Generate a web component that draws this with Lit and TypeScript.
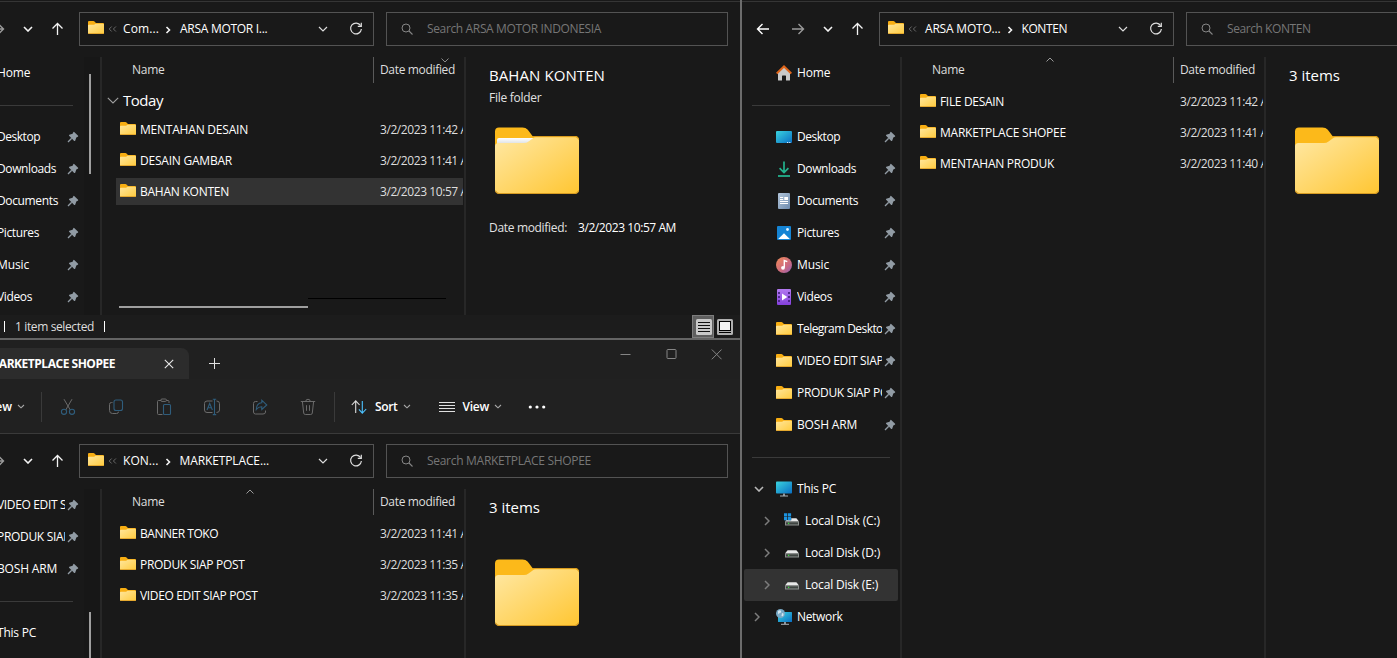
import { LitElement, html, css, svg, nothing } from "lit";
import { customElement, property, query } from "lit/decorators.js";
import { classMap } from "lit/directives/class-map.js";

/** A run of text tracked so that it fills a given width. */
@customElement("fit-text")
class FitText extends LitElement {
  @property() text = "";
  @property({ type: Number }) width = 0;
  @query("span") private run!: HTMLSpanElement;
  static styles = css`
    :host { display: inline-block; white-space: pre; flex: none; }
    span { display: inline-block; }
  `;
  updated() {
    this.run.style.letterSpacing = "0px";
    const natural = this.run.getBoundingClientRect().width;
    if (this.width) this.run.style.letterSpacing = (this.width - natural) / this.text.length + "px";
  }
  render() {
    return html`<span>${this.text}</span>`;
  }
}

const t = (text: string, width: number) => html`<fit-text .text=${text} .width=${width}></fit-text>`;

const drive = svg`
  <path d="M3.6 5.2h8.8l2.6 3.4H1z" fill="#e8e8e8"/>
  <path d="M1 8.4h14v4.1H1z" fill="#8d918f"/>
  <path d="M2 9.3h12v2.2H2z" fill="#3f4441"/>
  <path d="M4 9.8h1.2v1.2H4z" fill="#39e03c"/>`;

const screen = svg`
  <defs><linearGradient id="scr" x1="0" y1="0" x2="1" y2="1">
    <stop offset="0" stop-color="#3ad3de"/><stop offset="1" stop-color="#0a6fc4"/></linearGradient></defs>`;

const shapes: Record<string, { w: number; h: number; body: unknown }> = {
  folder: { w: 16, h: 13, body: svg`
    <defs><linearGradient id="f" x1="0" y1="0" x2="1" y2="1">
      <stop offset="0" stop-color="#ffe69c"/><stop offset="1" stop-color="#ffcb3d"/></linearGradient></defs>
    <path d="M0 1Q0 0 1 0h4.5q.6 0 1 .4L8 1.9h7q1 0 1 1V8H0z" fill="#f8ae12"/>
    <path d="M0 4.6q0-.9.9-.9H5.6q.5 0 .9-.3l1-.6h7.6q.9 0 .9.9v8.3q0 1-1 1H1q-1 0-1-1z" fill="url(#f)"/>
    <path d="M.3 12.5h15.4" stroke="#e2a42a" stroke-width=".9"/>` },
  bigfolder: { w: 84, h: 67, body: svg`
    <defs><linearGradient id="f" x1="0" y1="0" x2="1" y2="1">
      <stop offset="0" stop-color="#ffe8a4"/><stop offset="1" stop-color="#ffc632"/></linearGradient></defs>
    <path d="M0 4.500q0-4 4-4h23.5q3.2 0 5.300 2.200L37.500 9H80q4 0 4 4V40H0z" fill="#fcb91a"/>
    <path d="M0 19.500q0-3.500 3.500-3.500H29q2.500 0 4.500-1.500l4.500-3.300q1-1 3-1h39q4 0 4 3.500V62.500q0 4-4 4H4q-4 0-4-4z" fill="url(#f)"/>
    <path d="M37.500 9.500H80.500q2.500.3 3 3" fill="none" stroke="#d99b1e" stroke-width="1"/>
    <path d="M.5 64q1 2.500 3.500 2.500h76q2.500 0 3.500-2.500" fill="none" stroke="#d69b22" stroke-width="1.200"/>` },
  bigfolderfull: { w: 84, h: 67, body: svg`
    <defs><linearGradient id="f" x1="0" y1="0" x2="1" y2="1">
      <stop offset="0" stop-color="#ffe8a4"/><stop offset="1" stop-color="#ffc632"/></linearGradient>
      <linearGradient id="p" x1="0" y1="0" x2="0" y2="1">
      <stop offset="0" stop-color="#ffffff"/><stop offset="1" stop-color="#cfd3d8"/></linearGradient></defs>
    <path d="M0 4.500q0-4 4-4h23.5q3.200 0 5.300 2.200L37.500 9H80q4 0 4 4V40H0z" fill="#fcb91a"/>
    <path d="M2 13q0-2 2-2H38v8H2z" fill="url(#p)"/>
    <path d="M0 19.500q0-3.500 3.500-3.500H29q2.500 0 4.500-1.500l4.500-3.300q1-1 3-1h39q4 0 4 3.500V62.500q0 4-4 4H4q-4 0-4-4z" fill="url(#f)"/>
    <path d="M37.500 9.500H80.500q2.500.3 3 3" fill="none" stroke="#d99b1e" stroke-width="1"/>
    <path d="M.5 64q1 2.500 3.500 2.500h76q2.500 0 3.500-2.500" fill="none" stroke="#d69b22" stroke-width="1.200"/>` },
  back: { w: 14, h: 14, body: svg`<path d="M13 7H1.600M6.500 2 1.500 7l5 5" fill="none" stroke="#fff" stroke-width="1.400"/>` },
  forward: { w: 14, h: 14, body: svg`<path d="M1 7h11.400M7.500 2l5 5-5 5" fill="none" stroke="#9a9a9a" stroke-width="1.400"/>` },
  up: { w: 14, h: 14, body: svg`<path d="M6.500 13V1.600M1.500 6.500l5-5 5 5" fill="none" stroke="#f4f4f4" stroke-width="1.300"/>` },
  recent: { w: 10, h: 6, body: svg`<path d="m1 1 4 4 4-4" fill="none" stroke="#f4f4f4" stroke-width="1.600"/>` },
  down: { w: 10, h: 6, body: svg`<path d="m1 1 4 4 4-4" fill="none" stroke="#dcdcdc" stroke-width="1.200"/>` },
  small: { w: 8, h: 5, body: svg`<path d="m1 1 3 2.800L7 1" fill="none" stroke="#a8a8a8" stroke-width="1.100"/>` },
  group: { w: 12, h: 7, body: svg`<path d="m.8.8 5.200 5.200L11.200.8" fill="none" stroke="#a0a0a0" stroke-width="1.100"/>` },
  sortup: { w: 8, h: 5, body: svg`<path d="m.5 4.500 3.500-3.500 3.500 3.500" fill="none" stroke="#9a9a9a" stroke-width="1"/>` },
  sortdown: { w: 8, h: 5, body: svg`<path d="m.5.5 3.500 3.500L7.500.5" fill="none" stroke="#8a8a8a" stroke-width="1"/>` },
  open: { w: 10, h: 6, body: svg`<path d="m1 1 4 4 4-4" fill="none" stroke="#b8b8b8" stroke-width="1.600"/>` },
  closed: { w: 6, h: 10, body: svg`<path d="m1 1 4 4-4 4" fill="none" stroke="#7d7d7d" stroke-width="1.500"/>` },
  crumb: { w: 8, h: 8, body: svg`<path d="m2.500 1 3 3-3 3" fill="none" stroke="#f4f4f4" stroke-width="1.600"/>` },
  overflow: { w: 9, h: 6, body: svg`<path d="M3.700.5 1.200 3l2.500 2.500M7.900.5 5.400 3l2.500 2.500" fill="none" stroke="#6a6a6a" stroke-width="1"/>` },
  refresh: { w: 14, h: 14, body: svg`<path d="M11.600 3.600A5.400 5.400 0 1 0 12.400 7" fill="none" stroke="#dedede" stroke-width="1.200"/><path d="M12.300.8v3.500H8.800" fill="none" stroke="#dedede" stroke-width="1.200"/>` },
  search: { w: 12, h: 12, body: svg`<circle cx="5" cy="5" r="4" fill="none" stroke="#868686" stroke-width="1"/><path d="m8 8 3.500 3.500" stroke="#868686" stroke-width="1.100"/>` },
  pin: { w: 12, h: 12, body: svg`<path d="M7.200.9 11.100 4.800q.4.600-.3.900L9.300 6.400 8.200 9.700q-.4.700-1 .2L2.100 4.800q-.5-.6.200-1L5.600 2.700 6.300 1.200q.3-.7.900-.3z" fill="#919ba4"/><path d="M4.700 7.300 1 11" stroke="#919ba4" stroke-width="1.300"/>` },
  home: { w: 16, h: 16, body: svg`
    <path d="M2 7.500 8 2l6 5.500V15q0 .6-.6.600H10V11q0-.6-.6-.6H6.600q-.6 0-.6.600v4.600H2.600q-.6 0-.6-.6z" fill="#c9c9c9"/>
    <path d="M.7 8.400 8 1.500l7.300 6.900" fill="none" stroke="#e0661b" stroke-width="2"/>` },
  desktop: { w: 16, h: 12, body: svg`${screen}<rect width="16" height="12" rx="1" fill="url(#scr)"/><path d="M11 11.500h1.200M13.200 11.500h1.200" stroke="#d8ecff"/>` },
  downloads: { w: 14, h: 16, body: svg`<path d="M7 .5v11M2.600 7.200 7 11.600l4.400-4.400" fill="none" stroke="#23b28d" stroke-width="1.700"/><path d="M1 15h12" stroke="#23b28d" stroke-width="1.800"/>` },
  documents: { w: 12, h: 16, body: svg`
    <defs><linearGradient id="d" x1="0" y1="0" x2="1" y2="1"><stop offset="0" stop-color="#b3c6da"/><stop offset="1" stop-color="#6d8bae"/></linearGradient></defs>
    <rect width="12" height="16" rx="1" fill="url(#d)"/><path d="M2 4.500h3.200M2 6.500h3.200M2 8.500h8M2 10.500h8" stroke="#fff"/><path d="M6.300 4H10v3H6.300z" fill="#fff"/>` },
  pictures: { w: 14, h: 14, body: svg`
    <rect width="14" height="14" rx="1" fill="#1584d4"/><path d="M1.200 13 7 7.300 12.800 13z" fill="#fff"/><circle cx="10.500" cy="3.500" r="1.400" fill="#e4f3ff"/>` },
  music: { w: 16, h: 16, body: svg`
    <defs><linearGradient id="m" x1="0" y1="0" x2="1" y2="1"><stop offset="0" stop-color="#f28b56"/><stop offset=".6" stop-color="#cc6a80"/><stop offset="1" stop-color="#8f60b8"/></linearGradient></defs>
    <circle cx="8" cy="8" r="8" fill="url(#m)"/><path d="M8.300 10.500V3.500l3 1.200" fill="none" stroke="#fff" stroke-width="1.400"/><circle cx="7" cy="10.800" r="1.900" fill="#fff"/>` },
  videos: { w: 14, h: 16, body: svg`
    <defs><linearGradient id="v" x1="0" y1="0" x2="0" y2="1"><stop offset="0" stop-color="#b37af0"/><stop offset="1" stop-color="#8440dc"/></linearGradient></defs>
    <rect width="14" height="16" rx="1" fill="url(#v)"/><path d="M5 4.500v7L10.300 8z" fill="#fff"/>
    <path d="M2 3v10M12 3v10" stroke="#42207c" stroke-width="1.700" stroke-dasharray="2 2"/>` },
  pc: { w: 16, h: 16, body: svg`${screen}<rect y=".5" width="16" height="12" rx=".8" fill="url(#scr)"/><path d="M7 12.500h2v2.500H7z" fill="#8a929a"/><path d="M4 15h8" stroke="#a8b0b6" stroke-width="1"/>` },
  network: { w: 16, h: 16, body: svg`${screen}<rect x="2" y="3" width="14" height="10" rx=".6" fill="url(#scr)"/><path d="M8 13h2v2H8z" fill="#8a929a"/><path d="M5 15.300h8" stroke="#a8b0b6" stroke-width="1"/><circle cx="4.500" cy="4.500" r="4.500" fill="#78a9c6"/><path d="M2 2q2-1.500 3 0t-1 2-2 1.500zM6 4q2 0 1.500 2T5.500 7z" fill="#d3e6f0"/>` },
  disk: { w: 16, h: 16, body: drive },
  sysdisk: { w: 16, h: 16, body: svg`${drive}<path d="M0 .2h7.200v7H0z" fill="#191919"/><path d="M0 .2h3.200v3.200H0zM3.900.2h3.200v3.200H3.900zM0 4.100h3.200v3.200H0zM3.900 4.100h3.200v3.200H3.900z" fill="#1c93e0"/>` },
  close: { w: 10, h: 10, body: svg`<path d="m.8.8 8.400 8.400M9.200.8.800 9.200" stroke="#e8e8e8" stroke-width="1.100"/>` },
  plus: { w: 11, h: 11, body: svg`<path d="M5.500 0v11M0 5.500h11" stroke="#e0e0e0" stroke-width="1"/>` },
  min: { w: 11, h: 11, body: svg`<path d="M.5 5.500h10" stroke="#858585"/>` },
  max: { w: 11, h: 11, body: svg`<rect x="1" y=".5" width="9" height="9" rx=".8" fill="none" stroke="#858585"/>` },
  exit: { w: 11, h: 11, body: svg`<path d="m.8.5 9.800 9.800M10.600.5.800 10.300" stroke="#858585"/>` },
  cut: { w: 16, h: 18, body: svg`<path d="M4 1.200 10.300 12M12 1.200 5.700 12" fill="none" stroke="#6b6b6b"/><circle cx="4" cy="13.800" r="2.600" fill="none" stroke="#2f5d7c" stroke-width="1.100"/><circle cx="12" cy="13.800" r="2.600" fill="none" stroke="#2f5d7c" stroke-width="1.100"/>` },
  copy: { w: 16, h: 18, body: svg`<path d="M4.500 4.500H3.500q-2 0-2 2v6q0 3 3 3h4q2 0 2-1.800" fill="none" stroke="#6b6b6b"/><rect x="6" y="2" width="8.500" height="10.500" rx="2" fill="none" stroke="#2f5d7c" stroke-width="1.100"/>` },
  paste: { w: 16, h: 18, body: svg`<path d="M6.500 16.500h-4q-1 0-1-1v-12q0-1 1-1H5M10.500 2.500H12q1 0 1 1V5" fill="none" stroke="#6b6b6b"/><rect x="4.800" y="1" width="5.700" height="2.400" rx="1.200" fill="none" stroke="#6b6b6b"/><rect x="7.500" y="6.500" width="7" height="10" rx="1" fill="none" stroke="#2f5d7c" stroke-width="1.100"/>` },
  rename: { w: 16, h: 18, body: svg`<path d="M8.500 14.500H3q-2.500 0-2.500-2.500V5.500Q.5 3 3 3h5.500M12.500 3q3 0 3 2.500V12q0 2.500-3 2.500" fill="none" stroke="#6b6b6b"/><path d="M3 12 5.700 5.500 8.400 12M4 9.800h3.500M10.500 1.500v15M8.800 1.300h3.400M8.800 16.600h3.400" fill="none" stroke="#2f5d7c" stroke-width="1.100"/>` },
  share: { w: 16, h: 18, body: svg`<path d="M5.500 3.500h-2q-2 0-2 2V14q0 2 2 2H11q2.500 0 2.500-2v-1.500" fill="none" stroke="#6b6b6b"/><path d="M4.300 11.500Q4.500 5 9.800 4.800V2.200L14.800 7 9.800 11.500V8.800Q6.500 8.700 4.300 11.500z" fill="none" stroke="#2f5d7c" stroke-width="1.100"/>` },
  trash: { w: 16, h: 18, body: svg`<path d="M.8 3.500h14.400M5.800 3.200q0-1.900 2.200-1.900t2.200 1.900M2.400 3.500 3.700 15q.2 1.500 1.600 1.500h5.400q1.400 0 1.600-1.500L13.600 3.500M6.500 7.200v5.600M9.500 7.200v5.600" fill="none" stroke="#6b6b6b"/>` },
  sort: { w: 16, h: 16, body: svg`<path d="M4.700 14V2M.8 6l3.900-4.200L8.600 6" fill="none" stroke="#dcdcdc" stroke-width="1.100"/><path d="M11.300 2v12M7.900 10.400l3.400 3.800 3.900-4.200" fill="none" stroke="#4cc2ff" stroke-width="1.100"/>` },
  lines: { w: 16, h: 12, body: svg`<path d="M0 1.500h16M0 4.500h16M0 7.500h16M0 10.500h16" stroke="#e0e0e0" stroke-width="1"/>` },
  dots: { w: 18, h: 4, body: svg`<circle cx="2.300" cy="2" r="1.600" fill="#fff"/><circle cx="9" cy="2" r="1.600" fill="#fff"/><circle cx="15.700" cy="2" r="1.600" fill="#fff"/>` },
  vdetails: { w: 16, h: 16, body: svg`<rect width="16" height="16" rx="1.500" fill="#c9c9c9"/><path d="M2 3.500h12M2 6.500h12M2 9.500h12M2 12.500h12" stroke="#111"/>` },
  vlarge: { w: 16, h: 16, body: svg`<rect width="16" height="16" rx="1.500" fill="#b0b0b0"/><rect x="2.500" y="2.500" width="11" height="9" fill="#f2f2f2" stroke="#000"/><path d="M2 13.500h12" stroke="#000"/>` },
};

@customElement("app-icon")
class AppIcon extends LitElement {
  @property() name = "";
  static styles = css`
    :host { display: block; flex: none; }
    svg { display: block; }
  `;
  render() {
    const s = shapes[this.name];
    return html`<svg width=${s.w} height=${s.h} viewBox="0 0 ${s.w} ${s.h}">${s.body}</svg>`;
  }
}

const icon = (name: string) => html`<app-icon name=${name}></app-icon>`;

type NavItem = { icon?: string; label?: string; w?: number; pin?: boolean; twist?: string; sub?: boolean; selected?: boolean; rule?: boolean };
type Row = { name: string; w: number; date: string; selected?: boolean };
type Pane = {
  crumbs: [string, number][]; wide?: boolean; search: [string, number]; nav: NavItem[]; scroll?: "top" | "bottom";
  sort: "up" | "down"; group?: boolean; rows: Row[]; title: [string, number]; kind?: string; modified?: string; hscroll?: boolean;
};

@customElement("explorer-pane")
class ExplorerPane extends LitElement {
  @property({ attribute: false }) pane!: Pane;
  static styles = css`
    :host { display: flex; flex-direction: column; width: 798px; min-height: 0; flex: 1; background: #191919; }
    * { box-sizing: border-box; }
    .bar { display: flex; height: 55px; flex: none; padding-top: 10px; }
    .nav { width: 137px; height: 34px; display: grid; grid-template-columns: 42px 27px 34px 25px 9px; justify-items: center; align-items: center; }
    .address { width: 295px; height: 34px; border: 1px solid #535353; display: flex; align-items: center; padding: 0 10px 0 8px; color: #fff; }
    .address .folder { margin-top: -3px; }
    .address .over { margin: -1px 6px 0 4px; }
    .address.wide .over { margin-right: 8px; }
    .address .crumb { margin: 1px 8px 0 5px; }
    .fill { flex: 1; }
    .address .drop { margin-right: 21px; }
    .search { width: 342px; height: 34px; margin-left: 12px; border: 1px solid #535353; display: flex; align-items: center; padding-left: 14px; color: #767676; gap: 14px; }
    .body { display: flex; flex: 1; min-height: 0; overflow: hidden; }
    .side { width: 158px; overflow: hidden; flex: none; display: flex; }
    .tree { width: 158px; padding-left: 2px; flex: none; }
    .scrolled .tree { width: 142px; }
    .track { width: 16px; background: #171717; padding-left: 5px; }
    .thumb { width: 2px; height: 100px; background: #9f9f9f; margin-top: 17px; }
    .thumb.low { margin-top: 123px; height: 200px; }
    .item { height: 32px; width: 154px; display: flex; align-items: center; padding: 0 0 0 32px; border-radius: 2px; color: #fff; }
    .scrolled .item { width: 137px; }
    .item.selected { background: #333; }
    .item.twisty { padding-left: 10px; }
    .item.sub { padding-left: 20px; }
    .twist { width: 22px; display: flex; align-items: center; }
    .sub .twist { width: 20px; }
    .glyph { width: 16px; display: flex; justify-content: center; }
    .glyph.low { margin-top: -1px; }
    .item .label { flex: 1; margin-left: 5px; overflow: hidden; display: flex; margin-right: 2px; }
    .item .pin { margin-right: 2px; }
    .rule { height: 32px; display: flex; align-items: center; padding: 0 10px 0 8px; }
    .rule i { height: 1px; flex: 1; background: #3a3a3a; }
    .scrolled .rule { padding-right: 11px; }
    .list { width: 364px; flex: none; border-left: 2px solid #272727; padding-right: 1px; overflow: hidden; display: flex; flex-direction: column; }
    .head { height: 29px; display: flex; color: #dedede; flex: none; }
    .cell { display: grid; justify-items: center; align-content: start; height: 26px; grid-template-columns: 100%; grid-template-rows: 5px 18px; }
    .cell.name { width: 271px; }
    .cell.name .cap { justify-self: start; padding-left: 30px; }
    .cell.name .mark { margin-left: 24px; }
    .cell.date { border-left: 1px solid #5a5a5a; flex: 1; justify-items: start; padding-left: 6px; }
    .cell .cap { display: flex; align-items: center; height: 16px; }
    .cell.date .mark { margin-left: 61px; margin-top: 1px; }
    .mark { height: 5px; }
    .group { height: 28px; display: flex; align-items: center; font-size: 15px; color: #fff; gap: 4px; padding: 0 0 0 5px; }
    .row { height: 27px; margin: 2px 0 2px 14px; display: flex; align-items: center; padding-left: 4px; color: #fff; }
    .row.selected { background: #333; }
    .row .name { width: 244px; padding-left: 4px; }
    .row .when { overflow: hidden; flex: 1; min-width: 0; color: #dedede; }
    .row .folder { margin-top: -2px; }
    .hscroll { margin-top: auto; height: 17px; display: flex; padding-left: 17px; }
    .hscroll .grip { width: 189px; height: 2px; margin-top: 8px; background: #9f9f9f; }
    .hscroll .rest { width: 138px; height: 1px; background: #000; }
    .details { flex: 1; border-left: 2px solid #272727; padding: 6px 0 0 23px; color: #e2e2e2; display: flex; flex-direction: column; }
    .title { height: 25px; line-height: 24px; font-size: 15px; color: #fff; }
    .kind { height: 19px; line-height: 20px; }
    .big { height: 67px; margin: 20px 0 0 6px; }
    .meta { margin-top: 24px; line-height: 20px; display: flex; gap: 11px; }
    .meta .value { color: #fff; }
  `;
  private navItem(i: NavItem) {
    if (i.rule) return html`<div class="rule"><i></i></div>`;
    return html`<div class=${classMap({ item: true, selected: !!i.selected, twisty: !!i.twist, sub: !!i.sub })}>
      ${i.twist ? html`<span class="twist">${icon(i.twist)}</span>` : nothing}
      <span class=${classMap({ glyph: true, low: i.icon === "folder" })}>${icon(i.icon!)}</span>
      <span class="label">${t(i.label!, i.w!)}</span>
      ${i.pin ? html`<span class="pin">${icon("pin")}</span>` : nothing}
    </div>`;
  }
  render() {
    const p = this.pane;
    const mark = (on: boolean) => html`<div class="mark">${on ? icon("sort" + p.sort) : nothing}</div>`;
    return html`
      <div class="bar">
        <div class="nav">${["back", "forward", "recent", "up"].map(icon)}</div>
        <div class=${classMap({ address: true, wide: !!p.wide })}>
          <span class="folder">${icon("folder")}</span><span class="over">${icon("overflow")}</span>
          ${t(...p.crumbs[0])}<span class="crumb">${icon("crumb")}</span>${t(...p.crumbs[1])}
          <span class="fill"></span><span class="drop">${icon("down")}</span>${icon("refresh")}
        </div>
        <div class="search">${icon("search")}${t(...p.search)}</div>
      </div>
      <div class="body">
        <div class=${classMap({ side: true, scrolled: !!p.scroll })}>
          <div class="tree">${p.nav.map((i) => this.navItem(i))}</div>
          ${p.scroll ? html`<div class="track"><div class=${classMap({ thumb: true, low: p.scroll === "bottom" })}></div></div>` : nothing}
        </div>
        <div class="list">
          <div class="head">
            <div class="cell name">${mark(p.sort === "up")}<div class="cap">${t("Name", 32.500)}</div></div>
            <div class="cell date">${mark(p.sort === "down")}<div class="cap">${t("Date modified", 75)}</div></div>
          </div>
          ${p.group ? html`<div class="group">${icon("group")}${t("Today", 40)}</div>` : nothing}
          ${p.rows.map((r) => html`<div class=${classMap({ row: true, selected: !!r.selected })}>
            <span class="folder">${icon("folder")}</span><span class="name">${t(r.name, r.w)}</span>
            <span class="when">${t(r.date, 98)}</span></div>`)}
          ${p.hscroll ? html`<div class="hscroll"><div class="grip"></div><div class="rest"></div></div>` : nothing}
        </div>
        <div class="details">
          <div class="title">${t(...p.title)}</div>
          <div class="kind">${p.kind ? t(p.kind, 52.500) : nothing}</div>
          <div class="big">${icon(p.kind ? "bigfolderfull" : "bigfolder")}</div>
          ${p.modified ? html`<div class="meta">${t("Date modified:", 78)}<span class="value">${t(p.modified, 98)}</span></div>` : nothing}
        </div>
      </div>`;
  }
}

const home: NavItem = { icon: "home", label: "Home", w: 33.500 };
const rule: NavItem = { rule: true };
const places: NavItem[] = [
  { icon: "desktop", label: "Desktop", w: 43, pin: true },
  { icon: "downloads", label: "Downloads", w: 59, pin: true },
  { icon: "documents", label: "Documents", w: 61, pin: true },
  { icon: "pictures", label: "Pictures", w: 42, pin: true },
  { icon: "music", label: "Music", w: 32, pin: true },
  { icon: "videos", label: "Videos", w: 35, pin: true },
];
const pinned: NavItem[] = [
  { icon: "folder", label: "VIDEO EDIT SIAP POST", w: 117.500, pin: true },
  { icon: "folder", label: "PRODUK SIAP POST", w: 104.500, pin: true },
  { icon: "folder", label: "BOSH ARM", w: 60, pin: true },
];
const thisPc: NavItem = { icon: "pc", label: "This PC", w: 39, twist: "open" };

const motor: Pane = {
  crumbs: [["Com...", 36], ["ARSA MOTOR I...", 87.500]],
  search: ["Search ARSA MOTOR INDONESIA", 174],
  nav: [home, rule, ...places],
  scroll: "top", sort: "down", group: true, hscroll: true,
  rows: [
    { name: "MENTAHAN DESAIN", w: 108, date: "3/2/2023 11:42 AM" },
    { name: "DESAIN GAMBAR", w: 92, date: "3/2/2023 11:41 AM" },
    { name: "BAHAN KONTEN", w: 89, date: "3/2/2023 10:57 AM", selected: true },
  ],
  title: ["BAHAN KONTEN", 116], kind: "File folder", modified: "3/2/2023 10:57 AM",
};
const shopee: Pane = {
  crumbs: [["KON...", 35.500], ["MARKETPLACE...", 89.500]],
  search: ["Search MARKETPLACE SHOPEE", 164],
  nav: [...pinned, rule, thisPc],
  scroll: "bottom", sort: "up",
  rows: [
    { name: "BANNER TOKO", w: 78, date: "3/2/2023 11:41 AM" },
    { name: "PRODUK SIAP POST", w: 104.500, date: "3/2/2023 11:35 AM" },
    { name: "VIDEO EDIT SIAP POST", w: 117.500, date: "3/2/2023 11:35 AM" },
  ],
  title: ["3 items", 51],
};
const konten: Pane = {
  crumbs: [["ARSA MOTO...", 75.500], ["KONTEN", 45.500]], wide: true,
  search: ["Search KONTEN", 83.500],
  nav: [
    home, rule, ...places,
    { icon: "folder", label: "Telegram Desktop", w: 92.500, pin: true },
    ...pinned, rule, thisPc,
    { icon: "sysdisk", label: "Local Disk (C:)", w: 75, twist: "closed", sub: true },
    { icon: "disk", label: "Local Disk (D:)", w: 75, twist: "closed", sub: true },
    { icon: "disk", label: "Local Disk (E:)", w: 73, twist: "closed", sub: true, selected: true },
    { icon: "network", label: "Network", w: 45.500, twist: "closed" },
  ],
  sort: "up",
  rows: [
    { name: "FILE DESAIN", w: 64, date: "3/2/2023 11:42 AM" },
    { name: "MARKETPLACE SHOPEE", w: 126, date: "3/2/2023 11:41 AM" },
    { name: "MENTAHAN PRODUK", w: 114, date: "3/2/2023 11:40 AM" },
  ],
  title: ["3 items", 51],
};

@customElement("app-root")
class AppRoot extends LitElement {
  static styles = css`
    :host { display: flex; width: 1397px; height: 658px; overflow: hidden; background: #191919; font: 12px/16px "Open Sans", "Noto Sans", sans-serif; color: #fff; }
    * { box-sizing: border-box; }
    .left { width: 742px; border-right: 2px solid #6c6c6c; display: flex; flex-direction: column; flex: none; }
    .right { flex: 1; overflow: hidden; display: flex; flex-direction: column; }
    .edge { height: 2px; flex: none; background: #191919; border-bottom: 1px solid #353535; }
    .clip { overflow: hidden; display: flex; flex-direction: column; min-height: 0; }
    .upper { height: 338px; }
    .lower { height: 320px; border-top: 2px solid #646464; }
    .shift { margin-left: -58px; }
    .status { height: 23px; flex: none; background: #1c1c1c; display: flex; align-items: center; padding: 0 7px 0 4px; }
    .tick { width: 1px; height: 11px; background: #fff; }
    .count { margin: 0 10px 0 10px; color: #dedede; display: flex; }
    .gap { flex: 1; }
    .mode { width: 22px; height: 23px; display: flex; align-items: center; justify-content: center; border: 1px solid #7d7d7d; background: #5f5f5f; margin-right: 3px; padding: 1px 0 0 2px; }
    .tabs { height: 39px; flex: none; background: #202020; display: flex; }
    .tab { width: 189px; height: 31px; margin-top: 8px; background: #2c2c2c; border-radius: 0 8px 0 0; display: flex; align-items: center; font-weight: 700; padding-right: 15px; }
    .tab .cap { margin: 1px 0 0 -12px; }
    .add { margin: 18px 0 0 20px; }
    .wins { display: flex; gap: 34.500px; margin: 9px 18px 0 0; }
    .tools { height: 55px; flex: none; background: #212121; border-bottom: 1px solid #3a3a3a; display: flex; align-items: center; font-weight: 600; padding-top: 1px; }
    .new { width: 41px; display: flex; align-items: center; gap: 5px; }
    .new .cap { margin-left: -14px; }
    .sep { width: 1px; height: 30px; background: #3a3a3a; }
    .acts { display: flex; gap: 32px; padding: 0 18px 0 18px; }
    .sort { display: flex; align-items: center; gap: 5px; margin-left: 16px; }
    .sort app-icon:first-child, .view app-icon:first-child { margin-right: 3px; }
    .view { display: flex; align-items: center; gap: 5px; margin-left: 28px; }
    .more { margin-left: 26px; }
  `;
  render() {
    return html`
      <div class="left">
        <div class="clip upper">
          <div class="edge"></div>
          <explorer-pane class="shift" .pane=${motor}></explorer-pane>
          <div class="status">
            <span class="tick"></span><span class="count">${t("1 item selected", 79)}</span><span class="tick"></span>
            <span class="gap"></span><span class="mode">${icon("vdetails")}</span>${icon("vlarge")}
          </div>
        </div>
        <div class="clip lower">
          <div class="tabs">
            <div class="tab"><span class="cap">${t("MARKETPLACE SHOPEE", 127)}</span><span class="gap"></span>${icon("close")}</div>
            <span class="add">${icon("plus")}</span><span class="gap"></span>
            <div class="wins">${["min", "max", "exit"].map(icon)}</div>
          </div>
          <div class="tools">
            <div class="new"><span class="cap">${t("New", 26)}</span>${icon("small")}</div>
            <span class="sep"></span>
            <div class="acts">${["cut", "copy", "paste", "rename", "share", "trash"].map(icon)}</div>
            <span class="sep"></span>
            <div class="sort">${icon("sort")}${t("Sort", 22.500)}${icon("small")}</div>
            <div class="view">${icon("lines")}${t("View", 26.500)}${icon("small")}</div>
            <span class="more">${icon("dots")}</span>
          </div>
          <explorer-pane class="shift" .pane=${shopee}></explorer-pane>
        </div>
      </div>
      <div class="right">
        <div class="edge"></div>
        <explorer-pane .pane=${konten}></explorer-pane>
      </div>`;
  }
}
